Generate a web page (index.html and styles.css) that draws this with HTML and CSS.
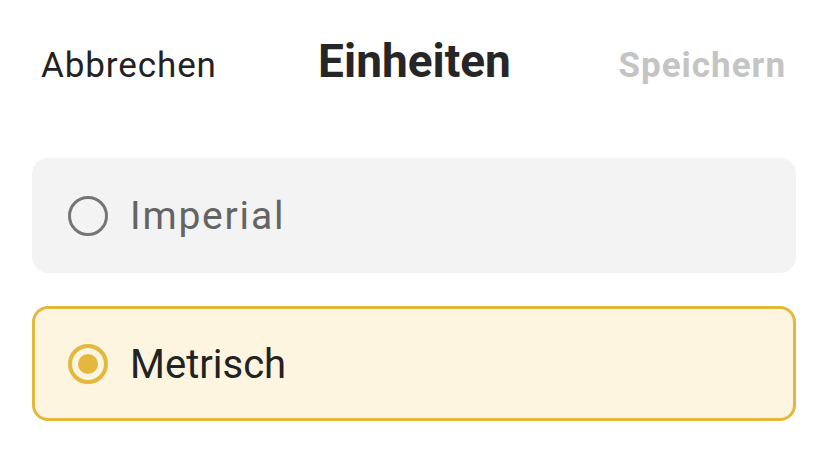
FILE: index.html
```html
<!DOCTYPE html>
<html lang="de">
<head>
<meta charset="utf-8">
<link rel="stylesheet" href="styles.css">
</head>
<body>
<div class="screen">
  <header class="topbar">
    <span class="cancel">Abbrechen</span>
    <span class="title">Einheiten</span>
    <span class="save">Speichern</span>
  </header>
  <div class="options">
    <div class="option">
      <span class="radio"></span>
      <span class="label imperial">Imperial</span>
    </div>
    <div class="option selected">
      <span class="radio"><span class="dot"></span></span>
      <span class="label">Metrisch</span>
    </div>
  </div>
</div>
</body>
</html>
```

FILE: styles.css
```css
html, body {
  margin: 0;
  padding: 0;
  background: #ffffff;
}
body {
  font-family: Roboto, "Liberation Sans", sans-serif;
}
.screen {
  width: 828px;
  height: 451px;
  box-sizing: border-box;
  padding: 0 32px 0 32px;
}
.topbar {
  display: grid;
  grid-template-columns: 1fr auto 1fr;
  align-items: baseline;
  height: 110px;
  padding: 38px 10px 0 9px;
  box-sizing: border-box;
}
.cancel {
  justify-self: start;
  font-size: 35px;
  letter-spacing: 0.9px;
  color: #222222;
  line-height: 1;
}
.title {
  font-size: 46px;
  font-weight: 700;
  color: #262626;
  line-height: 1;
  margin-left: 2px;
}
.save {
  justify-self: end;
  font-size: 35px;
  font-weight: 700;
  letter-spacing: 1px;
  color: #c4c4c4;
  line-height: 1;
}
.options {
  display: flex;
  flex-direction: column;
  gap: 33px;
  padding-top: 48px;
}
.option {
  display: flex;
  align-items: center;
  height: 115px;
  box-sizing: border-box;
  border-radius: 16px;
  background: #f3f3f3;
  padding-left: 36px;
  gap: 22px;
}
.option.selected {
  background: #fdf5e0;
  border: 3px solid #e4b73d;
  padding-left: 33px;
}
.radio {
  width: 40px;
  height: 40px;
  box-sizing: border-box;
  border-radius: 50%;
  border: 3px solid #767676;
  display: flex;
  align-items: center;
  justify-content: center;
  flex: none;
}
.selected .radio {
  border: 4px solid #e4b73d;
}
.dot {
  width: 20px;
  height: 20px;
  border-radius: 50%;
  background: #e4b73d;
}
.label {
  font-size: 40px;
  color: #646464;
  line-height: 1;
  padding-top: 2px;
}
.label.imperial {
  font-size: 39px;
  letter-spacing: 1.8px;
}
.selected .label {
  color: #222222;
}
```
